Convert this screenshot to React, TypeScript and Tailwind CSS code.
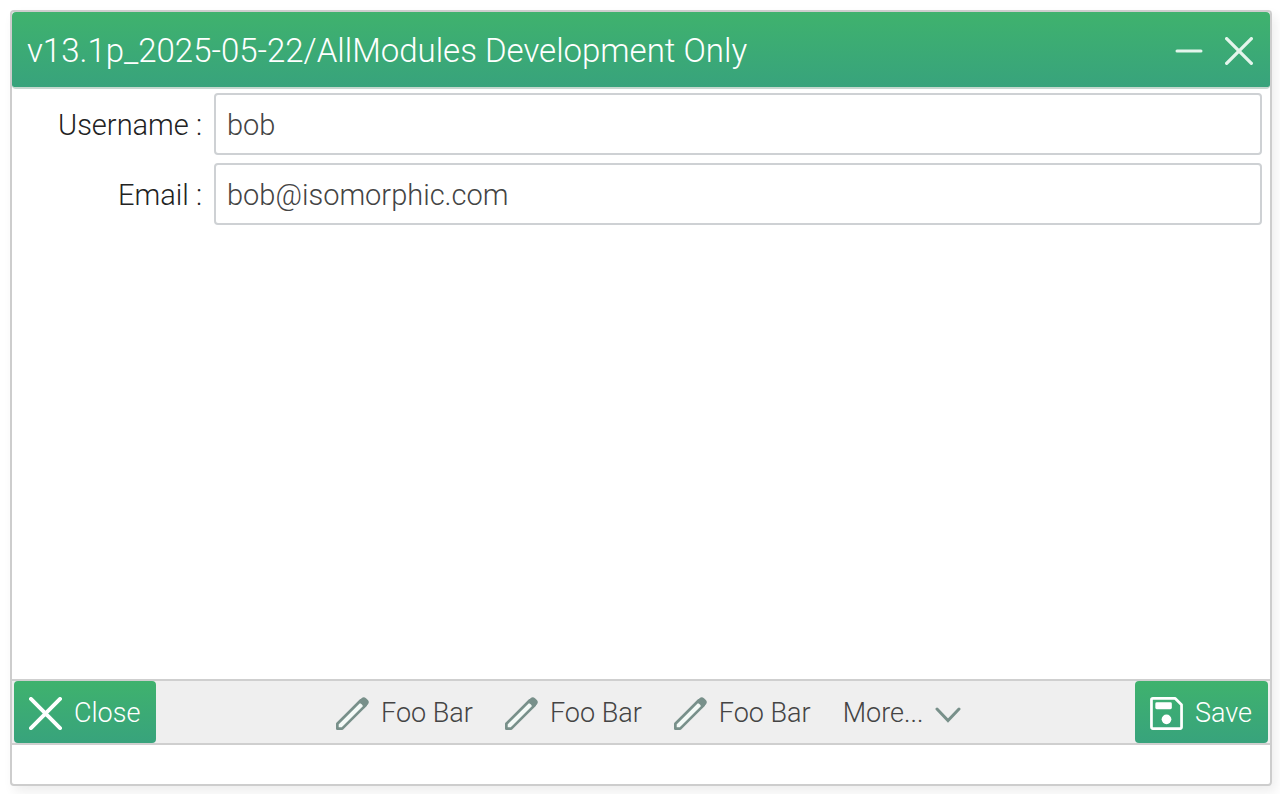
import { ReactNode, useState } from 'react'

const actions = [1, 2, 3]

const CrossIcon = ({ className }: { className: string }) => (
  <svg
    viewBox="0 0 34 34"
    fill="none"
    stroke="currentColor"
    strokeWidth="4"
    strokeLinecap="round"
    className={className}
    aria-hidden="true"
  >
    <path d="M2 2 32 32M32 2 2 32" />
  </svg>
)

const PencilIcon = () => (
  <svg viewBox="0 0 34 34" className="h-[33px] w-[33px] shrink-0" aria-hidden="true">
    <path
      d="M1.4 32.6V27.6L25.4 3.6 30.4 8.6 6.4 32.6Z"
      fill="#f4faf7"
      stroke="#78908a"
      strokeWidth="2.8"
      strokeLinejoin="round"
    />
    <path
      d="M22.5 5 26.3 1.2Q28.6 -.8 30.9 1.2L32.8 3.1Q34.8 5.4 32.8 7.7L29 11.5 26.8 7.6Z"
      fill="#78908a"
    />
  </svg>
)

const SaveIcon = () => (
  <svg viewBox="0 0 34 34" className="h-[33px] w-[33px] shrink-0" aria-hidden="true">
    <path
      d="M3 1.5H26L32.5 8V31Q32.5 32.5 31 32.5H3Q1.5 32.5 1.5 31V3Q1.5 1.5 3 1.5Z"
      fill="none"
      stroke="currentColor"
      strokeWidth="2.8"
      strokeLinejoin="round"
    />
    <rect x="5.5" y="5.5" width="17" height="7" rx="1.5" fill="currentColor" />
    <circle cx="17" cy="23" r="5" fill="currentColor" />
  </svg>
)

type FieldProps = {
  id: string
  label: string
  type: string
  value: string
  onChange: (value: string) => void
}

const Field = ({ id, label, type, value, onChange }: FieldProps) => (
  <div className="flex items-center gap-3">
    <label
      htmlFor={id}
      className="w-[190px] shrink-0 pt-0.5 text-right text-[#222222]"
    >
      {label} :
    </label>
    <input
      id={id}
      type={type}
      value={value}
      onChange={(e) => onChange(e.target.value)}
      className="h-[62px] min-w-0 flex-1 rounded border-2 border-[#ced1d4] bg-white px-[11px] pt-0.5 text-[#444444] outline-none"
    />
  </div>
)

const PrimaryButton = ({ children }: { children: ReactNode }) => (
  <button
    type="button"
    className="flex h-[62px] items-center gap-3 rounded bg-linear-to-b from-[#3fb26d] to-[#38a37c] pt-0.5 pr-4 pl-[15px] text-white"
  >
    {children}
  </button>
)

const App = () => {
  const [username, setUsername] = useState('bob')
  const [email, setEmail] = useState('bob@isomorphic.com')

  return (
    <div className="flex min-h-screen flex-col bg-white pt-2.5 pr-2 pb-2 pl-2.5 font-['Roboto',sans-serif] text-[29px] leading-9 font-light">
      <main className="flex flex-1 flex-col rounded border-2 border-[#cdcdcd] bg-white shadow-[4px_6px_12px_rgba(0,0,0,0.07)]">
        <header className="flex h-[77px] items-center justify-between rounded-sm border-b-2 border-[#c6d8d0] bg-linear-to-b from-[#3fb26d] to-[#38a37c] pt-0.5 pr-[17px] pl-[15px] text-white">
          <h1 className="text-[33px] leading-10 font-light">
            v13.1p_2025-05-22/AllModules Development Only
          </h1>
          <div className="flex items-center gap-[22px] text-[#e4f5ec]">
            <button type="button" aria-label="Minimize">
              <svg
                viewBox="0 0 28 28"
                stroke="currentColor"
                strokeWidth="3"
                strokeLinecap="round"
                className="h-7 w-7"
                aria-hidden="true"
              >
                <path d="M2 14H26" />
              </svg>
            </button>
            <button type="button" aria-label="Close window">
              <CrossIcon className="h-7 w-7" />
            </button>
          </div>
        </header>

        <form className="flex flex-1 flex-col gap-2 pt-1 pr-2">
          <Field
            id="username"
            label="Username"
            type="text"
            value={username}
            onChange={setUsername}
          />
          <Field
            id="email"
            label="Email"
            type="email"
            value={email}
            onChange={setEmail}
          />
        </form>

        <div className="flex items-center justify-between border-y-2 border-[#cfcfcf] bg-[#efefef] px-0.5 text-[27px]">
          <PrimaryButton>
            <CrossIcon className="h-[33px] w-[33px]" />
            Close
          </PrimaryButton>
          <div className="flex items-center gap-8 pt-0.5 pl-1.5 text-[#444444]">
            {actions.map((action) => (
              <button key={action} type="button" className="flex items-center gap-3">
                <PencilIcon />
                Foo Bar
              </button>
            ))}
            <button type="button" className="flex items-center gap-3">
              More...
              <svg
                viewBox="0 0 26 16"
                fill="none"
                stroke="#78908a"
                strokeWidth="3"
                strokeLinecap="round"
                className="mt-1 h-4 w-[26px]"
                aria-hidden="true"
              >
                <path d="M2 2 13 13.5 24 2" />
              </svg>
            </button>
          </div>
          <PrimaryButton>
            <SaveIcon />
            Save
          </PrimaryButton>
        </div>
        <footer className="h-[39px]" />
      </main>
    </div>
  )
}

export default App
